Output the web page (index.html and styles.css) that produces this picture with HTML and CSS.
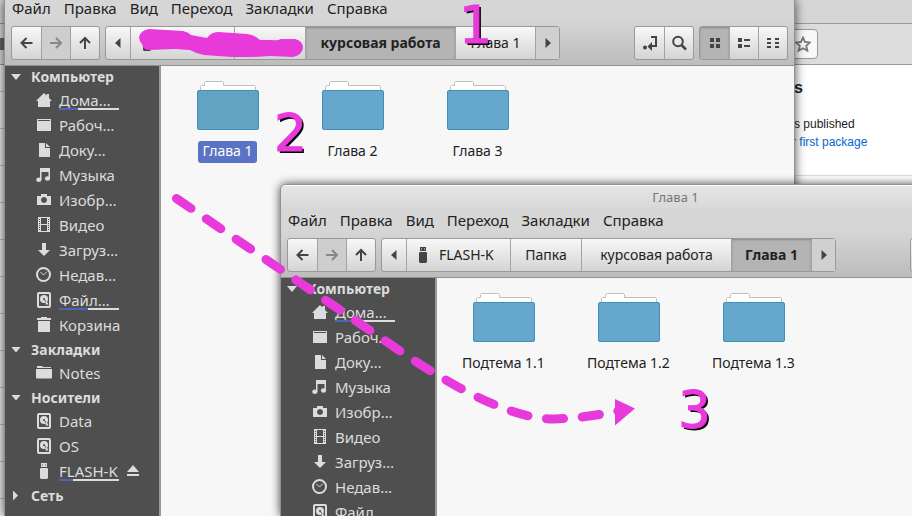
FILE: index.html
```html
<!DOCTYPE html>
<html lang="ru">
<head>
<meta charset="utf-8">
<title>Глава 1</title>
<link rel="stylesheet" href="styles.css">
</head>
<body>
<svg class="defs" aria-hidden="true">
  <defs>
    <symbol id="i-back" viewBox="0 0 16 16"><path d="M13.500 8H3M7.500 3L2.500 8l5 5" fill="none" stroke="currentColor" stroke-width="2"/></symbol>
    <symbol id="i-forward" viewBox="0 0 16 16"><path d="M2 8h10.500M8 3l5 5-5 5" fill="none" stroke="currentColor" stroke-width="2"/></symbol>
    <symbol id="i-up" viewBox="0 0 16 16"><path d="M8 14V3M3 8l5-5 5 5" fill="none" stroke="currentColor" stroke-width="2"/></symbol>
    <symbol id="i-left" viewBox="0 0 16 16"><path d="M10.500 3v10L5 8z" fill="currentColor"/></symbol>
    <symbol id="i-right" viewBox="0 0 16 16"><path d="M5.500 3v10L11 8z" fill="currentColor"/></symbol>
    <symbol id="i-open" viewBox="0 0 16 16"><path d="M9 2h5v9H9" fill="none" stroke="currentColor" stroke-width="2"/><path d="M10 7v9l-4.500-4.500z" fill="currentColor"/><circle cx="3" cy="12.500" r="2" fill="currentColor"/></symbol>
    <symbol id="i-search" viewBox="0 0 16 16"><circle cx="7" cy="6.500" r="4.800" fill="none" stroke="currentColor" stroke-width="2"/><path d="M10.500 10l4.500 4.500" stroke="currentColor" stroke-width="2.500"/></symbol>
    <symbol id="i-grid" viewBox="0 0 16 16"><path d="M3 3h4v4H3zM9 3h4v4H9zM3 9h4v4H3zM9 9h4v4H9z" fill="currentColor"/></symbol>
    <symbol id="i-list" viewBox="0 0 16 16"><path d="M2 3h4v4H2zM2 9h4v4H2zM8 4h6v2H8zM8 10h6v2H8z" fill="currentColor"/></symbol>
    <symbol id="i-compact" viewBox="0 0 16 16"><path d="M2 3h4v2H2zM2 7h4v2H2zM2 11h4v2H2zM10 3h4v2h-4zM10 7h4v2h-4zM10 11h4v2h-4z" fill="currentColor"/></symbol>
    <symbol id="i-home" viewBox="0 0 16 16"><path d="M8 1l2.500 2.500V2h2.500v4l3 3h-2v6H2V9H0z" fill="currentColor"/></symbol>
    <symbol id="i-desktop" viewBox="0 0 16 16"><path d="M1 2h14v1H1zM1 4h14v10H1zM1 3h1v1H1zM14 3h1v1h-1z" fill="currentColor"/></symbol>
    <symbol id="i-doc" viewBox="0 0 16 16"><path d="M3 1h6v5h5v9H3zM10 1l4 4h-4z" fill="currentColor"/></symbol>
    <symbol id="i-music" viewBox="0 0 16 16"><path d="M4 1h10v11h-1.500V5h-7v8H4z" fill="currentColor"/><ellipse cx="2.800" cy="12.700" rx="2.600" ry="2.200" fill="currentColor"/><ellipse cx="11.500" cy="11.500" rx="2.600" ry="2.200" fill="currentColor"/></symbol>
    <symbol id="i-camera" viewBox="0 0 16 16"><path fill-rule="evenodd" d="M5 2h6v2h4v9H1V4h4zM8 5a3 3 0 1 0 .01 0z" fill="currentColor"/></symbol>
    <symbol id="i-video" viewBox="0 0 16 16"><path fill-rule="evenodd" d="M2 0h12v15H2zM5 1v6h6V1zM5 8v6h6V8zM3 2v1h1V2zM3 4v1h1V4zM3 6v1h1V6zM3 8v1h1V8zM3 10v1h1v-1zM3 12v1h1v-1zM12 2v1h1V2zM12 4v1h1V4zM12 6v1h1V6zM12 8v1h1V8zM12 10v1h1v-1zM12 12v1h1v-1z" fill="currentColor"/></symbol>
    <symbol id="i-down" viewBox="0 0 16 16"><path d="M6 1h4v7h4l-6 6-6-6h4z" fill="currentColor"/></symbol>
    <symbol id="i-clock" viewBox="0 0 16 16"><circle cx="7.500" cy="7.500" r="6.500" fill="none" stroke="currentColor" stroke-width="2"/><path d="M4.500 5l3 3L11 4.500" fill="none" stroke="currentColor" stroke-width="1"/></symbol>
    <symbol id="i-disk" viewBox="0 0 16 16"><rect x="2" y="1" width="12" height="14" rx="1" fill="none" stroke="currentColor" stroke-width="2"/><circle cx="8" cy="7" r="4" fill="currentColor"/><path d="M8 7l4 5" stroke="#4f4f4f" stroke-width="1"/><path d="M10.500 8.500l2 4h-3z" fill="currentColor"/><circle cx="8" cy="7" r="1" fill="#4f4f4f"/></symbol>
    <symbol id="i-trash" viewBox="0 0 16 16"><path d="M5 0h6v1h4v2H1V1h4zM2 4h12v11H2z" fill="currentColor"/></symbol>
    <symbol id="i-folder" viewBox="0 0 16 16"><path d="M1 1h5l1 1h8v1H1zM0 4h16v8.500a1 1 0 0 1-1 1H1a1 1 0 0 1-1-1z" fill="currentColor"/></symbol>
    <symbol id="i-usb" viewBox="0 0 16 16"><path fill-rule="evenodd" d="M5 0h6v4H5zM6 1.500v1h1v-1zM9 1.500v1h1v-1zM4 5.500l1-.5h6l1 .5V15l-1 1H5l-1-1z" fill="currentColor"/></symbol>
    <symbol id="i-eject" viewBox="0 0 16 16"><path d="M8 2l6 7H2zM2 11h12v2H2z" fill="currentColor"/></symbol>
    <symbol id="i-big-folder" viewBox="0 0 62 49"><path d="M3.500 12V5.500l1-1h3v-3l1-1h17l1 1v3h31l1 1V12z" fill="#fff" stroke="#bfbfbf"/><rect class="front" x=".5" y="9.500" width="61" height="39" rx="1.500"/></symbol>
  </defs>
</svg>

<main class="desktop">
  <section class="browser">
    <div class="tabs"></div>
    <div class="address"><span class="lock"></span><button class="star" aria-label="☆"><svg viewBox="0 0 16 16"><path d="M8 1.500l2 4.500 5 .5-3.800 3.300 1.200 4.900L8 12.200l-4.400 2.500 1.200-4.900L1 6.500 6 6z" fill="none" stroke="#777" stroke-width="1.800"/></svg></button></div>
    <div class="page">
      <div class="left-page"></div>
      <div class="article">
        <h1>s</h1>
        <p>s published</p>
        <p>r <a href="#">first package</a></p>
      </div>
    </div>
  </section>

  <section class="window first">
    <nav class="menubar"><button>Файл</button><button>Правка</button><button>Вид</button><button>Переход</button><button>Закладки</button><button>Справка</button></nav>
    <div class="toolbar">
      <div class="group"><button class="tool"><svg><use href="#i-back"/></svg></button><button class="tool" disabled><svg><use href="#i-forward"/></svg></button><button class="tool"><svg><use href="#i-up"/></svg></button></div>
      <div class="group crumbs"><button class="step"><svg><use href="#i-left"/></svg></button><button class="device"><svg><use href="#i-usb"/></svg></button><button class="parent"></button><button class="course active">курсовая работа</button><button class="chapter">Глава 1</button><button class="step last"><svg><use href="#i-right"/></svg></button></div>
      <div class="group push"><button class="tool"><svg><use href="#i-open"/></svg></button><button class="tool"><svg><use href="#i-search"/></svg></button></div>
      <div class="group"><button class="tool active"><svg><use href="#i-grid"/></svg></button><button class="tool"><svg><use href="#i-list"/></svg></button><button class="tool"><svg><use href="#i-compact"/></svg></button></div>
    </div>
    <div class="body">
      <aside class="sidebar">
        <h2>Компьютер</h2>
        <ul>
          <li><svg><use href="#i-home"/></svg><span>Дома…</span><i class="usage"><b style="width:32%"></b></i></li>
          <li><svg><use href="#i-desktop"/></svg><span>Рабоч…</span></li>
          <li><svg><use href="#i-doc"/></svg><span>Доку…</span></li>
          <li><svg><use href="#i-music"/></svg><span>Музыка</span></li>
          <li><svg><use href="#i-camera"/></svg><span>Изобр…</span></li>
          <li><svg><use href="#i-video"/></svg><span>Видео</span></li>
          <li><svg><use href="#i-down"/></svg><span>Загруз…</span></li>
          <li><svg><use href="#i-clock"/></svg><span>Недав…</span></li>
          <li><svg><use href="#i-disk"/></svg><span>Файл…</span><i class="usage"><b style="width:48%"></b></i></li>
          <li><svg><use href="#i-trash"/></svg><span>Корзина</span></li>
        </ul>
        <h2>Закладки</h2>
        <ul><li><svg><use href="#i-folder"/></svg><span>Notes</span></li></ul>
        <h2>Носители</h2>
        <ul>
          <li><svg><use href="#i-disk"/></svg><span>Data</span></li>
          <li><svg><use href="#i-disk"/></svg><span>OS</span></li>
          <li><svg><use href="#i-usb"/></svg><span>FLASH-K</span><i class="usage"><b style="width:23%"></b></i><button class="eject" aria-label="⏏"><svg><use href="#i-eject"/></svg></button></li>
        </ul>
        <h2 class="closed">Сеть</h2>
      </aside>
      <div class="files">
        <figure class="selected"><svg><use href="#i-big-folder"/></svg><figcaption>Глава 1</figcaption></figure>
        <figure><svg><use href="#i-big-folder"/></svg><figcaption>Глава 2</figcaption></figure>
        <figure><svg><use href="#i-big-folder"/></svg><figcaption>Глава 3</figcaption></figure>
      </div>
    </div>
  </section>

  <section class="window second">
    <header class="titlebar">Глава 1</header>
    <nav class="menubar"><button>Файл</button><button>Правка</button><button>Вид</button><button>Переход</button><button>Закладки</button><button>Справка</button></nav>
    <div class="toolbar">
      <div class="group"><button class="tool"><svg><use href="#i-back"/></svg></button><button class="tool" disabled><svg><use href="#i-forward"/></svg></button><button class="tool"><svg><use href="#i-up"/></svg></button></div>
      <div class="group crumbs"><button class="step"><svg><use href="#i-left"/></svg></button><button class="device"><svg><use href="#i-usb"/></svg>FLASH-K</button><button class="parent">Папка</button><button class="course">курсовая работа</button><button class="chapter active">Глава 1</button><button class="step last"><svg><use href="#i-right"/></svg></button></div>
      <div class="group push"><button class="tool"></button><button class="tool"></button></div>
      <div class="group"><button class="tool"></button><button class="tool"></button><button class="tool"></button></div>
    </div>
    <div class="body">
      <aside class="sidebar">
        <h2>Компьютер</h2>
        <ul>
          <li><svg><use href="#i-home"/></svg><span>Дома…</span><i class="usage"><b style="width:32%"></b></i></li>
          <li><svg><use href="#i-desktop"/></svg><span>Рабоч…</span></li>
          <li><svg><use href="#i-doc"/></svg><span>Доку…</span></li>
          <li><svg><use href="#i-music"/></svg><span>Музыка</span></li>
          <li><svg><use href="#i-camera"/></svg><span>Изобр…</span></li>
          <li><svg><use href="#i-video"/></svg><span>Видео</span></li>
          <li><svg><use href="#i-down"/></svg><span>Загруз…</span></li>
          <li><svg><use href="#i-clock"/></svg><span>Недав…</span></li>
          <li><svg><use href="#i-disk"/></svg><span>Файл…</span></li>
        </ul>
      </aside>
      <div class="files">
        <figure><svg><use href="#i-big-folder"/></svg><figcaption>Подтема 1.1</figcaption></figure>
        <figure><svg><use href="#i-big-folder"/></svg><figcaption>Подтема 1.2</figcaption></figure>
        <figure><svg><use href="#i-big-folder"/></svg><figcaption>Подтема 1.3</figcaption></figure>
      </div>
    </div>
  </section>

  <svg class="ink" width="912" height="516" viewBox="0 0 912 516">
    <path d="M149 29L183 31Q188 32 191 35L207 38Q211 32 218 32L247 34Q255 35 260 40L272 40Q277 41 281 39L295 39Q303 41 303 48Q302 55 293 57L270 56L252 57L232 57L204 55Q197 54 190 50L175 49L150 50Q143 50 142 44Q139 41 139 37Q141 30 149 29z" fill="#e83adb"/>
    <path d="M176.500 198.500L395 347.500Q500 420 555 419Q585 418 618 411" fill="none" stroke="#e83adb" stroke-width="9" stroke-linecap="round" stroke-dasharray="17.500 18.600"/>
    <path d="M615 399l20 9.500-20 17z" fill="#e83adb"/>
  </svg>
  <strong class="mark one">1</strong>
  <strong class="mark two">2</strong>
  <strong class="mark three">3</strong>
</main>
</body>
</html>
```
FILE: styles.css
```css
* { box-sizing: border-box; }
body { margin: 0; font: 14px/20px "Noto Sans", sans-serif; color: #222; }
button { font: inherit; color: inherit; border: 0; background: none; padding: 0; margin: 0; }
h1, h2, p, ul, figure { margin: 0; padding: 0; }
svg { display: block; width: 16px; height: 16px; flex: none; }
.defs { position: absolute; width: 0; height: 0; }
.desktop { position: relative; min-height: 100vh; overflow: hidden; background: #fff; }

.browser { position: absolute; inset: 0; font: 12px/18px "Liberation Sans", sans-serif; }
.tabs { height: 24px; background: #d6d6d6; border-bottom: 1px solid #999; }
.address { display: flex; align-items: center; justify-content: space-between; height: 41px; padding-right: 94px; background: #dcdcdc; border-bottom: 1px solid #999; }
.lock { width: 5px; height: 12px; background: #666; }
.star { display: flex; align-items: center; justify-content: flex-end; width: 40px; height: 30px; padding-right: 6px; border: 1px solid #999; border-radius: 4px; background: #f8f8f8; }
.page { display: flex; justify-content: space-between; }
.left-page { width: 20px; height: 451px; background: linear-gradient(#eee 0 36px, #bbb 36px) 0 -10px / 100% 37px; }
.article { width: 120px; height: 111px; padding-top: 13px; border-bottom: 1px solid #ddd; white-space: nowrap; }
.article h1 { margin-bottom: 18px; padding-left: 2px; font-size: 16px; line-height: 19px; }
.article p:nth-of-type(1) { padding-left: 2px; }
.article a { color: #0366d6; text-decoration: none; }

.window { position: absolute; bottom: 0; display: flex; flex-direction: column; width: calc(100% - 121px); border: solid #919191; border-width: 0 1px; background: #d6d6d6; box-shadow: 0 0 10px rgba(0, 0, 0, .7); }
.first { top: 0; left: 4px; }
.second { top: 184px; left: 280px; border-top-width: 1px; border-radius: 6px 6px 0 0; }
.titlebar { height: 27px; padding-top: 1px; border-top: 1px solid #fff; border-radius: 5px 5px 0 0; background: linear-gradient(#e5e5e5, #d6d6d6); color: #777; font-size: 13px; text-align: center; }
.menubar { display: flex; align-items: flex-start; gap: 13px; height: 18px; padding-left: 7px; font-size: 15px; line-height: 16px; }
.toolbar { display: flex; gap: 5px; height: 48px; padding: 8px 6px 0; border-bottom: 1px solid #919191; background: linear-gradient(#d6d6d6, #bcbcbc); }
.group { display: flex; height: 34px; border: 1px solid #999; border-radius: 3px; background: linear-gradient(#f8f8f8, #d4d4d4); }
.push { margin-left: auto; }
.group button { display: flex; align-items: center; justify-content: center; white-space: nowrap; }
.group button + button { border-left: 1px solid #a3a3a3; }
.tool { width: 29px; color: #444; }
.group .tool:disabled { color: #888; background: #cecece; }
.group .active { background: #b4b4b4; box-shadow: inset 0 1px 2px #888; font-weight: bold; }
.step { width: 24px; color: #444; }
.step.last { background: #d0d0d0; }
.group .device { justify-content: flex-start; width: 104px; padding-left: 8px; gap: 8px; }
.device svg { color: #444; }
.parent { width: 71px; }
.course { width: 150px; }
.chapter { width: 80px; }

.body { display: flex; flex: 1; min-height: 0; }
.sidebar { flex: none; width: 156px; overflow: hidden; background: #4f4f4f; border-right: 2px solid #999; color: #dcdcdc; }
.sidebar h2 { display: flex; align-items: center; gap: 10px; height: 23px; padding-left: 6px; font-size: 14px; line-height: 22px; }
.sidebar h2:first-child { height: 22px; }
.sidebar h2::before { content: ""; width: 10px; height: 6px; background: #dcdcdc; clip-path: polygon(0 0, 100% 0, 50% 100%); }
.sidebar h2.closed::before { height: 10px; clip-path: polygon(20% 0, 70% 50%, 20% 100%); }
.sidebar ul { list-style: none; }
.sidebar li { position: relative; display: flex; align-items: center; gap: 7px; height: 25px; padding: 0 0 2px 31px; font-size: 15px; }
.usage { position: absolute; left: 54px; bottom: 3px; width: 60px; height: 2px; background: #dcdcdc; }
.usage b { display: block; height: 2px; background: #4a64b8; }
.files { display: flex; flex: 1; align-items: flex-start; padding: 15px 0 0 4px; background: #f7f7f7; }
.files figure { display: flex; flex-direction: column; align-items: center; gap: 11px; width: 125px; }
.files svg { width: 62px; height: 49px; fill: #66a7cc; stroke: #3e8fb9; }
.files .selected svg { fill: #62a2c3; }
.files figcaption { padding: 0 4px 2px; border-radius: 3px; }
.selected figcaption { background: #5a73c4; color: #fff; }

.ink { position: absolute; left: 0; top: 0; width: 912px; height: 516px; pointer-events: none; }
.mark { position: absolute; color: #e83adb; font: 52px/60px "DejaVu Sans", sans-serif; -webkit-text-stroke: 1px #e83adb; text-shadow: 2px 2px #000; }
.one { left: 459px; top: -5px; }
.two { left: 274px; top: 103px; }
.three { left: 678px; top: 380px; }
```
